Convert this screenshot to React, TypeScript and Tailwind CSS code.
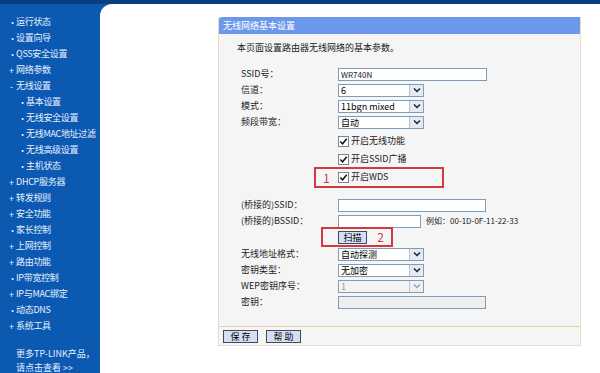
import React from 'react'

const font = { fontFamily: '"Noto Sans CJK SC", "Liberation Sans", sans-serif' }

type NavItem = { label: string; mark: '•' | '+' | '-'; sub?: boolean }

const nav: NavItem[] = [
  { label: '运行状态', mark: '•' },
  { label: '设置向导', mark: '•' },
  { label: 'QSS安全设置', mark: '•' },
  { label: '网络参数', mark: '+' },
  { label: '无线设置', mark: '-' },
  { label: '基本设置', mark: '•', sub: true },
  { label: '无线安全设置', mark: '•', sub: true },
  { label: '无线MAC地址过滤', mark: '•', sub: true },
  { label: '无线高级设置', mark: '•', sub: true },
  { label: '主机状态', mark: '•', sub: true },
  { label: 'DHCP服务器', mark: '+' },
  { label: '转发规则', mark: '+' },
  { label: '安全功能', mark: '+' },
  { label: '家长控制', mark: '•' },
  { label: '上网控制', mark: '+' },
  { label: '路由功能', mark: '+' },
  { label: 'IP带宽控制', mark: '•' },
  { label: 'IP与MAC绑定', mark: '+' },
  { label: '动态DNS', mark: '•' },
  { label: '系统工具', mark: '+' },
]

function Sidebar() {
  return (
    <div className="flex w-[100px] shrink-0 flex-col bg-[#0c59b2] pt-[10px] text-[9px] text-[#e8f0ff]">
      {nav.map((n) => (
        <div key={n.label} className={`flex h-[16px] items-center whitespace-nowrap ${n.sub ? 'pl-[18px]' : 'pl-[8px]'}`}>
          <span className="w-[7px] text-center text-[9px] leading-none">{n.mark}</span>
          <span className="pl-[1px] tracking-[-0.3px]">{n.label}</span>
        </div>
      ))}
      <div className="mt-[13px] pl-[16px] text-[9px] leading-[14px]">
        <div>更多TP-LINK产品，</div>
        <div>请点击查看 &gt;&gt;</div>
      </div>
    </div>
  )
}

function Chevron({ faded }: { faded?: boolean }) {
  return (
    <div className={`flex h-full w-[14px] items-center justify-center border-l border-[#b7c4d8] ${faded ? 'bg-[#eef0f3]' : 'bg-[#e4e9f2]'}`}>
      <svg width="8" height="6" viewBox="0 0 8 6">
        <path d="M1 1.5 L4 4.5 L7 1.5" fill="none" stroke={faded ? '#9aa3b0' : '#1c2330'} strokeWidth="1.5" />
      </svg>
    </div>
  )
}

function Select({ value, disabled }: { value: string; disabled?: boolean }) {
  return (
    <div className={`flex h-[13px] w-[86px] items-center border border-[#7f9db9] ${disabled ? 'bg-[#f4f4f4] text-[#9a9a9a]' : 'bg-white text-black'}`}>
      <span className="flex-1 truncate pl-[2px] text-[9px] leading-[11px]">{value}</span>
      <Chevron faded={disabled} />
    </div>
  )
}

function Input({ value, w, disabled }: { value?: string; w: string; disabled?: boolean }) {
  return (
    <div className={`flex h-[13px] items-center border border-[#7f9db9] pl-[2px] text-[8px] leading-[11px] ${w} ${disabled ? 'bg-[#eeeeee]' : 'bg-white'}`}>
      {value}
    </div>
  )
}

function Check({ label }: { label: string }) {
  return (
    <div className="flex items-center gap-[2px]">
      <svg width="11" height="11" viewBox="0 0 12 12">
        <rect x="0.5" y="0.5" width="11" height="11" fill="#fff" stroke="#6f7c8c" />
        <path d="M2.5 6 L5 8.5 L9.5 3" fill="none" stroke="#111" strokeWidth="1.6" />
      </svg>
      <span>{label}</span>
    </div>
  )
}

function Row({ label, children, h = 'h-[16px]' }: { label?: string; children?: React.ReactNode; h?: string }) {
  return (
    <div className={`flex items-center ${h}`}>
      <div className="w-[97px] shrink-0 whitespace-nowrap">{label}</div>
      {children}
    </div>
  )
}

function Btn({ children }: { children: React.ReactNode }) {
  return (
    <div className="flex h-[13px] items-center justify-center whitespace-nowrap border border-[#3a4a66] bg-[#d7def2] text-[9px] leading-none text-black">
      {children}
    </div>
  )
}

function Panel() {
  return (
    <div className="w-[363px] border border-t-0 border-[#e8dcc3] bg-[#f5f5f5] text-[9px] text-[#222]">
      <div className="flex h-[17px] items-center rounded-tl-[3px] bg-[#6b98ea] pl-[4px] text-[9px] text-white">无线网络基本设置</div>
      <div className="pl-[18px] pt-[6px] pb-[16px]">
        <div className="flex h-[16px] items-center">本页面设置路由器无线网络的基本参数。</div>
        <div className="mt-[10px] pl-[4px]">
          <Row label="SSID号：">
            <Input value="WR740N" w="w-[149px]" />
          </Row>
          <Row label="信道：">
            <Select value="6" />
          </Row>
          <Row label="模式：">
            <Select value="11bgn mixed" />
          </Row>
          <Row label="频段带宽：">
            <Select value="自动" />
          </Row>
          <div className="mt-[2px]">
            <Row h="h-[18px]">
              <Check label="开启无线功能" />
            </Row>
            <Row h="h-[18px]">
              <Check label="开启SSID广播" />
            </Row>
            <div className="relative">
              <Row h="h-[18px]">
                <Check label="开启WDS" />
              </Row>
              <div className="absolute left-[73px] top-[-1px] flex h-[21px] w-[130px] items-center border-2 border-[#d23a3f] pl-[7px] text-[12px] text-[#d23a3f]">
                1
              </div>
            </div>
          </div>
          <div className="mt-[11px]">
            <Row label="(桥接的)SSID：">
              <Input w="w-[148px]" />
            </Row>
            <Row label="(桥接的)BSSID：">
              <Input w="w-[83px]" />
              <span className="pl-[5px] text-[8px]">例如：00-1D-0F-11-22-33</span>
            </Row>
            <div className="relative">
              <Row h="h-[17px]">
                <div className="w-[29px]">
                  <Btn>扫描</Btn>
                </div>
              </Row>
              <div className="absolute left-[80px] top-[-2px] flex h-[20px] w-[72px] items-center justify-end border-2 border-[#d23a3f] pr-[7px] text-[12px] text-[#d23a3f]">
                2
              </div>
            </div>
            <Row label="无线地址格式：">
              <Select value="自动探测" />
            </Row>
            <Row label="密钥类型：">
              <Select value="无加密" />
            </Row>
            <Row label="WEP密钥序号：">
              <Select value="1" disabled />
            </Row>
            <Row label="密钥：">
              <Input w="w-[148px]" disabled />
            </Row>
          </div>
        </div>
      </div>
      <div className="flex h-[19px] items-center gap-[8px] border-t border-[#e8cfb0] pl-[4px]">
        <div className="w-[35px]">
          <Btn>保 存</Btn>
        </div>
        <div className="w-[35px]">
          <Btn>帮 助</Btn>
        </div>
      </div>
    </div>
  )
}

export default function App() {
  return (
    <div className="flex h-[373px] w-[600px] flex-col overflow-hidden bg-[#0c59b2]" style={font}>
      <div className="h-[4px] shrink-0 bg-[#0a3e82]" />
      <div className="flex flex-1">
        <Sidebar />
        <div className="flex-1 rounded-tl-[12px] bg-white pl-[118px] pt-[13px]">
          <Panel />
        </div>
      </div>
    </div>
  )
}
